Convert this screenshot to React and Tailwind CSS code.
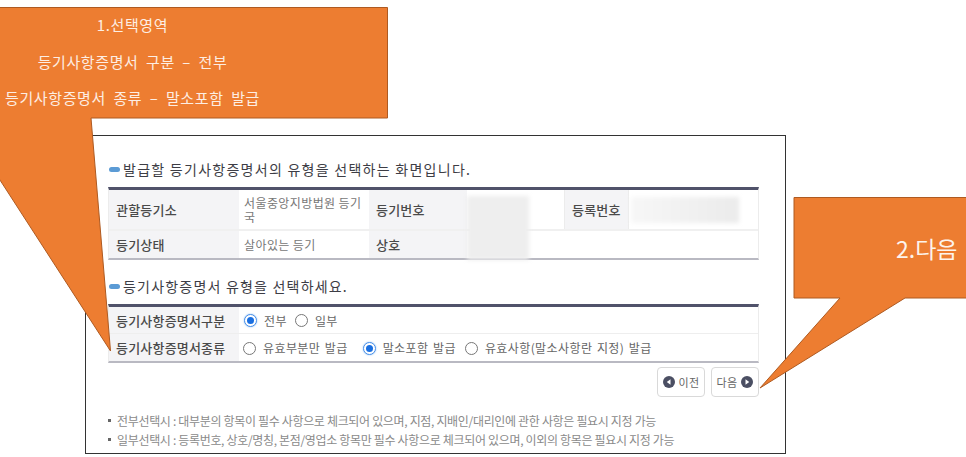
const KR = "font-['Noto_Sans_CJK_KR','Noto_Sans',sans-serif]";

function Heading({ children, className }) {
  return (
    <div className={`flex items-center gap-[3px] text-[14px] leading-[20px] text-[#3d3d45] ${className}`}>
      <span className="ml-[1px] w-[11px] h-[5px] rounded-full bg-[#5b9bd5] shrink-0" />
      <span>{children}</span>
    </div>
  );
}

function Label({ children, className = "" }) {
  return (
    <div className={`flex items-center pl-[7px] bg-[#f4f4f6] text-[13px] font-medium tracking-[0.2px] text-[#4a4a4a] whitespace-nowrap ${className}`}>
      {children}
    </div>
  );
}

function Value({ children, className = "" }) {
  return (
    <div className={`flex items-center px-[5px] text-[12px] leading-[14px] tracking-[0.4px] text-[#777] ${className}`}>
      {children}
    </div>
  );
}

function Radio({ checked, label, className = "" }) {
  return (
    <label className={`flex items-center gap-[7px] ${className}`}>
      {checked ? (
        <span className="w-[13px] h-[13px] rounded-full border border-[#4a90e8] bg-white flex items-center justify-center shadow-[0_0_2px_#8fc0f5]">
          <span className="w-[7px] h-[7px] rounded-full bg-[#1a6fe0]" />
        </span>
      ) : (
        <span className="w-[13px] h-[13px] rounded-full border border-[#777] bg-white" />
      )}
      <span className="text-[12px] tracking-[0.4px] [word-spacing:1.5px] text-[#666] whitespace-nowrap">{label}</span>
    </label>
  );
}

function ArrowDot({ left }) {
  return (
    <svg width="12" height="12" viewBox="0 0 12 12">
      <circle cx="6" cy="6" r="6" fill="#4b4f63" />
      <path d={left ? "M7.5 3.2 L3.8 6 L7.5 8.8 Z" : "M4.5 3.2 L8.2 6 L4.5 8.8 Z"} fill="#fff" />
    </svg>
  );
}

function NavButton({ children }) {
  return (
    <button className="w-[48px] h-[30px] flex items-center justify-center gap-[4px] rounded-[4px] border border-[#d9d9d9] bg-white text-[11px] tracking-[0.3px] text-[#666]">
      {children}
    </button>
  );
}

function Note({ children }) {
  return (
    <div className="flex items-center gap-[6px] h-[19px] text-[12px] tracking-[-0.33px] text-[#8a8a8a] whitespace-nowrap">
      <span className="w-[3px] h-[3px] bg-[#666] shrink-0" />
      <span>{children}</span>
    </div>
  );
}

export default function App() {
  return (
    <div className={`relative w-[966px] h-[457px] overflow-hidden bg-white pl-[85px] pt-[135px] ${KR}`}>
      {/* screenshot window */}
      <div className="w-[701px] h-[319px] border border-[#333] px-[22px] pt-[23px]">
        <Heading className="tracking-[1.27px]">발급할 등기사항증명서의 유형을 선택하는 화면입니다.</Heading>

        <div className="mt-[8px] w-[651px] border-t-[3px] border-t-[#50526a] border-b-2 border-b-[#b9b9c2] border-x border-x-[#ececec]">
          <div className="grid grid-cols-[130px_130px_98px_97px_65px_1fr] h-[41px] border-b-2 border-b-[#f0f0f0]">
            <Label>관할등기소</Label>
            <Value>서울중앙지방법원 등기국</Value>
            <Label>등기번호</Label>
            <Value className="relative">
              <span className="absolute left-0 top-[6px] w-[62px] h-[64px] bg-[#eeeeee] blur-[2px] z-10" />
            </Value>
            <Label className="border-x border-x-[#ececec]">등록번호</Label>
            <Value className="relative">
              <span className="absolute left-[2px] top-[7px] w-[108px] h-[26px] bg-gradient-to-r from-[#f7f7f7] to-[#ebebeb] blur-[2px]" />
            </Value>
          </div>
          <div className="grid grid-cols-[130px_130px_98px_1fr] h-[27px]">
            <Label>등기상태</Label>
            <Value>살아있는 등기</Value>
            <Label>상호</Label>
            <Value />
          </div>
        </div>

        <Heading className="mt-[16px] tracking-[1.2px]">등기사항증명서 유형을 선택하세요.</Heading>

        <div className="mt-[8px] w-[651px] border-t-[3px] border-t-[#50526a] border-b-2 border-b-[#b9b9c2] border-x border-x-[#ececec]">
          <div className="grid grid-cols-[130px_1fr] h-[27px] border-b border-b-[#eeeeee]">
            <Label className="pt-[1px]">등기사항증명서구분</Label>
            <div className="flex items-center pl-[5px] pt-[1px] gap-[8px]">
              <Radio checked label="전부" />
              <Radio label="일부" />
            </div>
          </div>
          <div className="grid grid-cols-[130px_1fr] h-[27px]">
            <Label className="pt-[1px]">등기사항증명서종류</Label>
            <div className="flex items-center pl-[4px] pt-[1px]">
              <Radio label="유효부분만 발급" />
              <Radio checked label="말소포함 발급" className="ml-[15px]" />
              <Radio label="유효사항(말소사항란 지정) 발급" className="ml-[9px]" />
            </div>
          </div>
        </div>

        <div className="mt-[4px] w-[651px] flex justify-end gap-[6px]">
          <NavButton><ArrowDot left />이전</NavButton>
          <NavButton>다음<ArrowDot /></NavButton>
        </div>

        <div className="mt-[14px]">
          <Note>전부선택시 : 대부분의 항목이 필수 사항으로 체크되어 있으며, 지점, 지배인/대리인에 관한 사항은 필요시 지정 가능</Note>
          <Note>일부선택시 : 등록번호, 상호/명칭, 본점/영업소 항목만 필수 사항으로 체크되어 있으며, 이외의 항목은 필요시 지정 가능</Note>
        </div>
      </div>

      {/* callouts */}
      <svg className="absolute left-0 top-0" width="966" height="457" viewBox="0 0 966 457">
        <path d="M-2 7.5 H387.5 V118 H91 L110.5 351 L-2 177 Z" fill="#ed7d31" stroke="#ae5a21" strokeWidth="1" />
        <path d="M794 197.5 H968 V298 H905 L760 388 L840 298 H794 Z" fill="#ed7d31" stroke="#ae5a21" strokeWidth="1" />
      </svg>
      <div className="absolute left-0 top-[7px] w-[265px] flex flex-col items-center text-[15px] leading-[36.5px] tracking-[0.6px] [word-spacing:3.6px] text-[#fdeee3] whitespace-nowrap">
        <span>1.선택영역</span>
        <span>등기사항증명서 구분 – 전부</span>
        <span>등기사항증명서 종류 – 말소포함 발급</span>
      </div>
      <div className="absolute left-[896px] top-[234px] text-[23px] leading-[28px] text-[#fdf3ec] whitespace-nowrap">2.다음</div>
    </div>
  );
}
